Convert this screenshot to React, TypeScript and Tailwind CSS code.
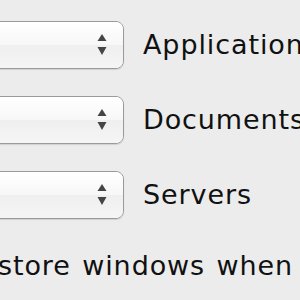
const rows = ["Applications", "Documents", "Servers"];

function Stepper() {
  return (
    <svg width="10" height="24" viewBox="0 0 10 24" className="text-[#454545]">
      <path d="M5 1 L9.5 8 L0.5 8 Z" fill="currentColor" />
      <path d="M0.5 14 L9.5 14 L5 22 Z" fill="currentColor" />
    </svg>
  );
}

function PopUp() {
  return (
    <div className="relative ml-[-12px] flex h-[48px] w-[136px] shrink-0 items-center justify-end overflow-hidden rounded-[8px] border-[1.5px] border-[#9a9a9a] pr-[16px] shadow-[0_1px_1px_rgba(0,0,0,0.12)]">
      <div className="absolute inset-0 flex flex-col">
        <div className="flex-1 bg-gradient-to-b from-[#ffffff] to-[#f7f7f7]" />
        <div className="flex-1 bg-gradient-to-b from-[#efefef] to-[#f5f5f5]" />
      </div>
      <div className="relative">
        <Stepper />
      </div>
    </div>
  );
}

export default function App() {
  return (
    <div
      className="h-[300px] w-[300px] overflow-hidden bg-[#ececec] pt-[21px] text-[27px] tracking-[0.9px] text-[#111] [word-spacing:2px]"
      style={{ fontFamily: '"DejaVu Sans", sans-serif' }}
    >
      <div className="flex flex-col gap-[27px]">
        {rows.map((label) => (
          <div className="flex items-center gap-[19px]" key={label}>
            <PopUp />
            <span className="whitespace-nowrap leading-normal">{label}</span>
          </div>
        ))}
        <p className="ml-[-38px] whitespace-nowrap leading-normal">
          Restore windows when quitting and re-opening apps
        </p>
      </div>
    </div>
  );
}
